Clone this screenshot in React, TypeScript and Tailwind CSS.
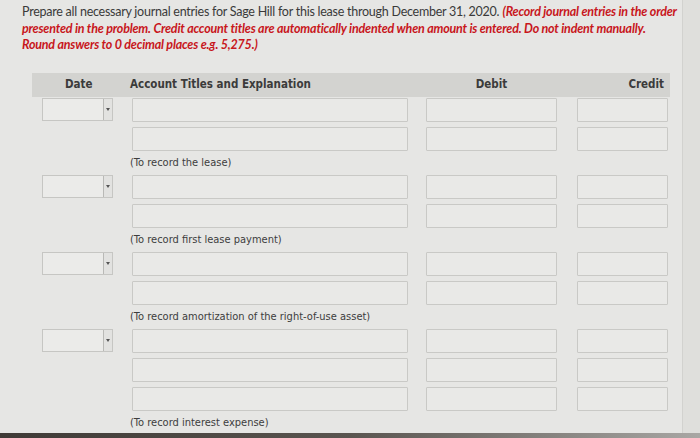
import React from 'react';

type Entry = { rows: number; note: string };

const entries: Entry[] = [
  { rows: 2, note: '(To record the lease)' },
  { rows: 2, note: '(To record first lease payment)' },
  { rows: 2, note: '(To record amortization of the right-of-use asset)' },
  { rows: 3, note: '(To record interest expense)' },
];

const box = 'h-[24px] border border-[#c9c9c6] bg-[#e9e9e7] rounded-[1px]';

const DateSelect: React.FC = () => (
  <div className="ml-[10px] flex h-[23px] w-[71px] border border-[#c6c6c3] bg-[#ebebe9]">
    <div className="flex-1" />
    <div className="flex w-[9px] items-center justify-center border-l border-[#b9b9b6] bg-[#e2e2e0]">
      <span className="block h-0 w-0 border-x-[2px] border-t-[3px] border-x-transparent border-t-[#555]" />
    </div>
  </div>
);

const JournalEntry: React.FC<{ entry: Entry }> = ({ entry }) => (
  <div className="flex flex-col">
    {Array.from({ length: entry.rows }).map((_, i) => (
      <div key={i} className="grid grid-cols-[100px_294px_151px_91px] mb-[5px]">
        <div>{i === 0 && <DateSelect />}</div>
        <input className={`${box} w-[276px] outline-none`} />
        <input className={`${box} w-[131px] outline-none`} />
        <input className={`${box} w-[91px] outline-none`} />
      </div>
    ))}
    <div className="grid grid-cols-[98px_1fr] h-[19px] items-start">
      <div />
      <div className="text-[11px] leading-[14px] text-[#3d3d3d] font-['DejaVu_Sans_Condensed','DejaVu_Sans',sans-serif]">
        {entry.note}
      </div>
    </div>
  </div>
);

export default function App() {
  return (
    <div className="relative h-[438px] w-[700px] overflow-hidden bg-[#e6e6e4] font-['Lato',sans-serif]">
      <div className="absolute right-0 top-0 h-full w-[18px] border-l border-[#d2d2cf] bg-[#dfdfdc]" />
      <div className="px-[22px] pt-[4px] text-[12.5px] leading-[16.5px] text-[#3a3a3a] whitespace-nowrap">
        <span className="tracking-[-0.25px]">
          Prepare all necessary journal entries for Sage Hill for this lease through December 31, 2020.
        </span>{' '}
        <span className="font-bold italic text-[#c8161c] tracking-[-0.2px]">
          (Record journal entries in the order
          <br />
          presented in the problem. Credit account titles are automatically indented when amount is entered. Do not indent manually.
          <br />
          Round answers to 0 decimal places e.g. 5,275.)
        </span>
      </div>

      <div className="ml-[32px] mt-[19px] w-[638px]">
        <div className="grid h-[24px] grid-cols-[98px_296px_151px_93px] items-center bg-[#d3d3d0] text-[11.5px] font-bold text-[#3b3b3b] font-['DejaVu_Sans_Condensed','DejaVu_Sans',sans-serif]">
          <div className="pl-[33px]">Date</div>
          <div>Account Titles and Explanation</div>
          <div className="pr-[20px] text-center">Debit</div>
          <div className="pr-[6px] text-right">Credit</div>
        </div>
        <div className="mt-[1px] flex flex-col">
          {entries.map((e, i) => (
            <JournalEntry key={i} entry={e} />
          ))}
        </div>
      </div>

      <div className="absolute bottom-0 left-0 h-[5px] w-full bg-gradient-to-r from-[#3f3a36] via-[#5a5550] to-[#a9a7a4]" />
    </div>
  );
}
